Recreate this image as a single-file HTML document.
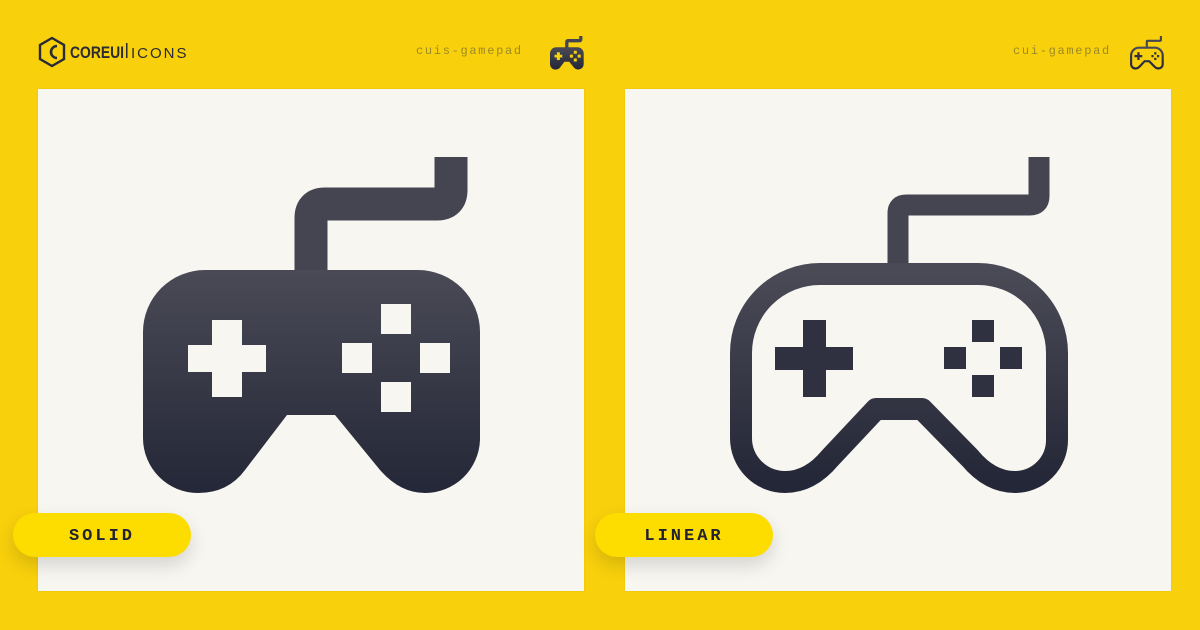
<!DOCTYPE html>
<html><head><meta charset="utf-8"><style>
body{margin:0;width:1200px;height:630px;overflow:hidden;background:#f8d00c;font-family:"Liberation Sans",sans-serif;position:relative}
.card{position:absolute;top:89px;width:546px;height:502px;background:#f7f6f1;box-shadow:0 0 2px rgba(0,0,0,.08)}
.pill{position:absolute;top:513px;width:178px;height:44px;border-radius:22px;background:#fddc00;box-shadow:0 8px 18px rgba(0,0,0,.14);font-family:"Liberation Mono",monospace;font-weight:bold;font-size:17px;letter-spacing:3px;color:#22232f;text-align:center;line-height:47px}
.lbl{position:absolute;top:44px;font-family:"Liberation Mono",monospace;font-size:12px;letter-spacing:1.7px;color:#9c8a25}
</style></head><body>
<div class="card" style="left:38px"></div>
<div class="card" style="left:625px"></div>
<div class="lbl" style="left:416px">cuis-gamepad</div>
<div class="lbl" style="left:1013px">cui-gamepad</div>
<svg width="1200" height="630" style="position:absolute;left:0;top:0">
<defs>
<linearGradient id="g" x1="0" y1="0" x2="0" y2="1"><stop offset="0" stop-color="#4a4a56"/><stop offset="1" stop-color="#242737"/></linearGradient>
<g id="solid">
<path d="M451,157 V190 Q451,204 437,204 H325 Q311,204 311,218 V275" fill="none" stroke="#454552" stroke-width="33"/>
<path fill-rule="evenodd" fill="url(#g)" d="M205,270 H418 A62,62 0 0 1 480,332 V440 A55,55 0 0 1 425,493 Q400,493 380,470 L335,415 H287 L245,470 Q228,493 198,493 A55,55 0 0 1 143,438 V332 A62,62 0 0 1 205,270 Z
M212,320 H242 V345 H266 V372 H242 V397 H212 V372 H188 V345 H212 Z
M381,304 h30 v30 h-30 Z M342,343 h30 v30 h-30 Z M420,343 h30 v30 h-30 Z M381,382 h30 v30 h-30 Z"/>
</g>
<g id="lin">
<path d="M1039,157 V196 Q1039,205 1030,205 H906 Q898,205 898,213 V266" fill="none" stroke="#454552" stroke-width="21"/>
<path fill="none" stroke="url(#g)" stroke-width="22" stroke-linejoin="round" d="M820,274 H978 A79,79 0 0 1 1057,353 V440 A42,42 0 0 1 1015,482 Q990,482 970,458 L922,409 H876 L830,458 Q810,482 785,482 A44,44 0 0 1 741,438 V353 A79,79 0 0 1 820,274Z"/>
<path fill="#2f3140" d="M803,320 h23 v27 h27 v23 h-27 v27 h-23 v-27 h-28 v-23 h28 Z M972,320 h22 v22 h-22Z M944,347 h22 v22 h-22Z M1000,347 h22 v22 h-22Z M972,375 h22 v22 h-22Z"/>
</g>
</defs>
<use href="#solid"/>
<use href="#lin"/>
<use href="#solid" transform="translate(550,36) scale(0.1) translate(-143,-157)"/>
<use href="#lin" transform="translate(1130,36) scale(0.1) translate(-730,-157)"/>
<g fill="none" stroke="#2b2b33" stroke-width="2.4">
<path d="M52,38 L64,45 V59 L52,66 L40,59 V45 Z"/>
<path d="M57,46 A6,6 0 1 0 57,58" stroke-width="2.6"/>
</g>
<text x="70" y="58" font-family="Liberation Sans" font-weight="bold" font-size="17" fill="#2b2b33" textLength="54" lengthAdjust="spacingAndGlyphs">COREUI</text>
<rect x="126" y="43" width="1.5" height="15" fill="#2b2b33"/>
<text x="131" y="58" font-family="Liberation Sans" font-size="15" fill="#2b2b33" letter-spacing="2">ICONS</text>
</svg>
<div class="pill" style="left:13px">SOLID</div>
<div class="pill" style="left:595px">LINEAR</div>
</body></html>
